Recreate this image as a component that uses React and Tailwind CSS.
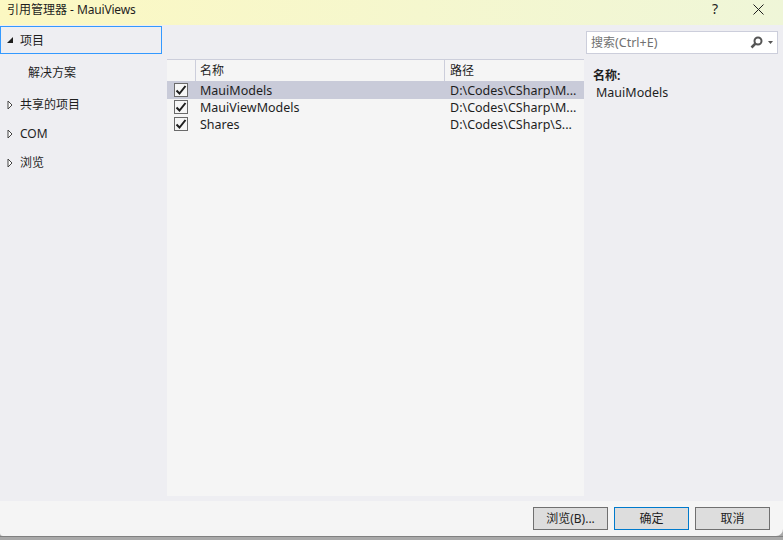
const font = '[font-family:"Segoe_UI","Noto_Sans","Noto_Sans_CJK_SC",sans-serif]';

const refs = [
  { name: 'MauiModels', path: 'D:\\Codes\\CSharp\\M...', selected: true },
  { name: 'MauiViewModels', path: 'D:\\Codes\\CSharp\\M...' },
  { name: 'Shares', path: 'D:\\Codes\\CSharp\\S...' },
];

function Check() {
  return (
    <span className="flex h-[14px] w-[14px] items-center justify-center border border-[#6a6a6a] bg-[#f6f6f6]">
      <svg width="12" height="12" viewBox="0 0 12 12">
        <path d="M1.5 6.5 L4.5 9.5 L10.5 2" fill="none" stroke="#1e1e1e" strokeWidth="2" />
      </svg>
    </span>
  );
}

function Arrow() {
  return (
    <svg width="6" height="10" viewBox="0 0 6 10" className="shrink-0">
      <path d="M1 1 L5 5 L1 9 Z" fill="#fff" stroke="#444" />
    </svg>
  );
}

function TreeItem({ label, mt }) {
  return (
    <div className={`flex h-[20px] items-center ${mt} pl-[7px]`}>
      <Arrow />
      <span className="ml-[7px]">{label}</span>
    </div>
  );
}

function Btn({ label, active }) {
  return (
    <button className={`h-[23px] w-[75px] border bg-[#dddddd] text-[12px] text-[#1e1e1e] ${active ? 'border-[#007acc]' : 'border-[#707070]'}`}>
      {label}
    </button>
  );
}

export default function App() {
  return (
    <div className={`flex h-[540px] w-[783px] flex-col overflow-hidden bg-[#a9a9a9] text-[12px] text-[#1e1e1e] ${font}`}>
      <div className="flex h-[25px] shrink-0 items-start justify-between bg-gradient-to-r from-[#fcf8c2] to-[#eff6d8] pl-[7px]">
        <span className="pt-[1px] leading-[18px]">引用管理器 - <span className="tracking-[-0.2px]">MauiViews</span></span>
        <div className="flex items-center pt-[1px]">
          <span className="mr-[35px] text-[14px] leading-[16px]">?</span>
          <svg width="11" height="11" viewBox="0 0 11 11" className="mr-[19px]">
            <path d="M0.5 0.5 L10.5 10.5 M10.5 0.5 L0.5 10.5" stroke="#1e1e1e" strokeWidth="1" />
          </svg>
        </div>
      </div>

      <div className="flex min-h-0 flex-1 bg-[#eeeef2]">
        <div className="w-[167px] shrink-0 pt-[1px]">
          <div className="flex h-[28px] w-[162px] items-center border border-[#3399ff] pl-[5px]">
            <svg width="8" height="8" viewBox="0 0 8 8">
              <path d="M7 1 V7 H1 Z" fill="#1e1e1e" />
            </svg>
            <span className="ml-[6px] pt-[1px]">项目</span>
          </div>
          <div className="mt-[10px] pl-[28px]">解决方案</div>
          <TreeItem label="共享的项目" mt="mt-[13px]" />
          <TreeItem label="COM" mt="mt-[9px]" />
          <TreeItem label="浏览" mt="mt-[9px]" />
        </div>

        <div className="mb-[5px] mt-[34px] flex w-[417px] shrink-0 flex-col bg-[#f5f5f5]">
          <div className="flex h-[22px] shrink-0 border-t border-[#cccedb]">
            <div className="w-[29px] border-r border-[#cccedb]" />
            <div className="flex w-[249px] items-center border-r border-[#cccedb] pl-[4px]">名称</div>
            <div className="flex items-center pl-[5px]">路径</div>
          </div>
          {refs.map((r) => (
            <div key={r.name} className={`flex items-center text-[12.5px] ${r.selected ? 'h-[18px] bg-[#c9cbd9]' : 'h-[17px]'}`}>
              <div className={`w-[29px] pl-[7px] ${r.selected ? '' : 'mb-[2px]'}`}>
                <Check />
              </div>
              <div className="w-[254px] pl-[4px] pt-[2px]">{r.name}</div>
              <div className="whitespace-nowrap pt-[2px]">{r.path}</div>
            </div>
          ))}
        </div>

        <div className="flex-1 pl-[2px] pt-[6px]">
          <div className="flex h-[23px] w-[192px] items-center justify-between border border-[#cccedb] bg-white pl-[4px] pr-[4px] text-[#717171]">
            <span className="pt-[2px]">搜索<span className="text-[12.5px]">(Ctrl+E)</span></span>
            <span className="flex items-center gap-[5px]">
              <svg width="13" height="13" viewBox="0 0 13 13">
                <circle cx="8" cy="5" r="3.5" fill="none" stroke="#555" strokeWidth="2" />
                <path d="M5.5 7.5 L1.5 11.5" stroke="#555" strokeWidth="2.5" />
              </svg>
              <svg width="5" height="3" viewBox="0 0 5 3">
                <path d="M0 0 H5 L2.5 3 Z" fill="#555" />
              </svg>
            </span>
          </div>
          <div className="mt-[13px] pl-[7px] font-bold leading-[17px]">名称:</div>
          <div className="pl-[10px] text-[12.5px] leading-[17px]">MauiModels</div>
        </div>
      </div>

      <div className="flex h-[35px] shrink-0 items-center justify-end gap-[6px] rounded-bl-[3px] rounded-br-[7px] bg-[#f5f5f5] pr-[13px]">
        <Btn label="浏览(B)..." />
        <Btn label="确定" active />
        <Btn label="取消" />
      </div>
      <div className="h-[4px] shrink-0 border-t border-[#808080]" />
    </div>
  );
}
